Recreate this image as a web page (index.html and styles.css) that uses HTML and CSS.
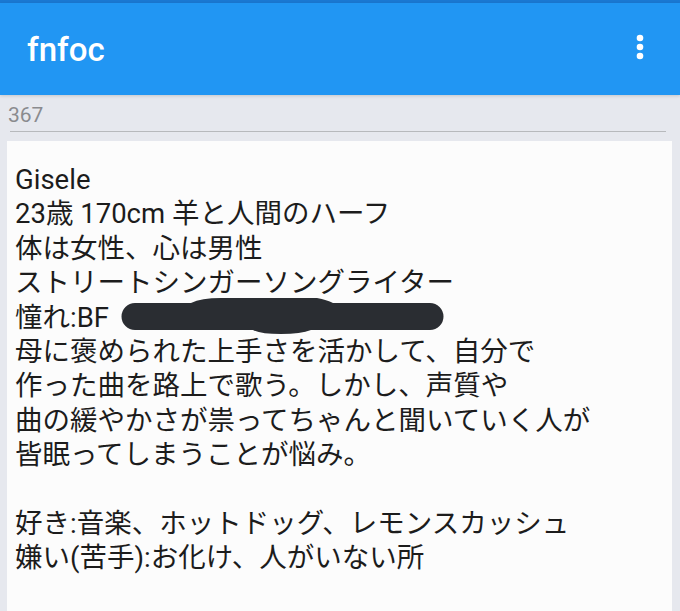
FILE: index.html
```html
<!DOCTYPE html>
<html lang="ja">
<head>
<meta charset="utf-8">
<link rel="stylesheet" href="styles.css">
</head>
<body>
<div class="status"></div>
<header class="appbar">
  <span class="title">fnfoc</span>
  <svg class="menu" width="8" height="26" viewBox="0 0 8 26"><circle cx="4" cy="4" r="3.3" fill="#fff"/><circle cx="4" cy="13" r="3.3" fill="#fff"/><circle cx="4" cy="22" r="3.3" fill="#fff"/></svg>
</header>
<main class="content">
  <div class="count">367</div>
  <div class="rule"></div>
  <article class="card">
    <p class="text">Gisele<br>23歳 170cm 羊と人間のハーフ<br>体は女性、心は男性<br>ストリートシンガーソングライター<br>憧れ:BF <span class="redact"><svg width="324" height="38" viewBox="0 0 324 38"><path d="M14 6 H70 Q80 1 100 1 H196 Q206 3 212 6 H309 A13.5 13.5 0 0 1 309 33 H190 Q180 37 160 37 Q140 37 132 33 H14 A13.5 13.5 0 0 1 14 6 Z" fill="#2a2d32"/></svg></span><br>母に褒められた上手さを活かして、自分で<br>作った曲を路上で歌う。しかし、声質や<br>曲の緩やかさが祟ってちゃんと聞いていく人が<br>皆眠ってしまうことが悩み。<br><br>好き:音楽、ホットドッグ、レモンスカッシュ<br>嫌い(苦手):お化け、人がいない所</p>
  </article>
</main>
</body>
</html>
```
FILE: styles.css
```css
html, body {
  margin: 0;
  padding: 0;
}
body {
  width: 680px;
  height: 611px;
  overflow: hidden;
  background: #e6e8ee;
  font-family: Roboto, "Noto Sans CJK JP", sans-serif;
}
.status {
  height: 3px;
  background: #1a78d2;
}
.appbar {
  height: 92px;
  background: #2196f3;
  display: flex;
  align-items: center;
  justify-content: space-between;
  padding: 0 36px 0 27px;
  box-shadow: 0 1px 3px rgba(0,0,0,0.15);
}
.title {
  color: #fff;
  font-size: 33px;
  font-weight: 500;
  margin-top: 0;
}
.menu {
  display: block;
  margin-top: -4px;
}
.content {
  padding: 0 7px;
}
.count {
  color: #8a8b8e;
  font-size: 21px;
  line-height: 22px;
  padding: 9px 0 0 1px;
}
.rule {
  height: 1px;
  background: #b7b9bc;
  margin: 5px 7px 0 3px;
}
.card {
  margin-top: 9px;
  background: #fcfcfc;
  height: 500px;
  margin-right: 1px;
}
.text {
  margin: 0;
  padding: 22px 8px 0 8px;
  font-size: 27.5px;
  line-height: 34.4px;
  color: #1c1c1c;
}
.redact {
  display: inline-block;
  vertical-align: top;
  margin-top: -4px;
  margin-left: 5px;
  height: 38px;
}
.redact svg {
  display: block;
}
```
